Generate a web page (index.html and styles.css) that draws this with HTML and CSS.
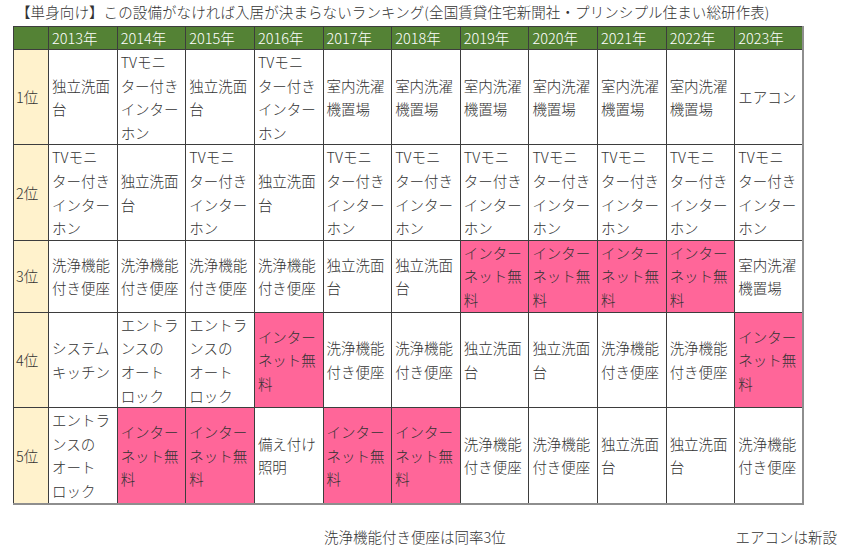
FILE: index.html
```html
<!DOCTYPE html>
<html lang="ja">
<head>
<meta charset="utf-8">
<title>単身向け 設備ランキング</title>
<link rel="stylesheet" href="styles.css">
</head>
<body>
<div class="page">
  <h1 class="title">【単身向け】この設備がなければ入居が決まらないランキング(全国賃貸住宅新聞社・プリンシプル住まい総研作表)</h1>
  <table class="rank">
    <colgroup>
      <col class="c-rank">
      <col class="c-year"><col class="c-year"><col class="c-year"><col class="c-year"><col class="c-year"><col class="c-year">
      <col class="c-year"><col class="c-year"><col class="c-year"><col class="c-year"><col class="c-year">
    </colgroup>
    <thead>
      <tr class="head">
        <th></th>
        <th>2013年</th><th>2014年</th><th>2015年</th><th>2016年</th><th>2017年</th><th>2018年</th>
        <th>2019年</th><th>2020年</th><th>2021年</th><th>2022年</th><th>2023年</th>
      </tr>
    </thead>
    <tbody>
      <tr class="r4">
        <th>1位</th>
        <td>独立洗面台</td>
        <td>TVモニター付きインターホン</td>
        <td>独立洗面台</td>
        <td>TVモニター付きインターホン</td>
        <td>室内洗濯機置場</td>
        <td>室内洗濯機置場</td>
        <td>室内洗濯機置場</td>
        <td>室内洗濯機置場</td>
        <td>室内洗濯機置場</td>
        <td>室内洗濯機置場</td>
        <td>エアコン</td>
      </tr>
      <tr class="r4b">
        <th>2位</th>
        <td>TVモニター付きインターホン</td>
        <td>独立洗面台</td>
        <td>TVモニター付きインターホン</td>
        <td>独立洗面台</td>
        <td>TVモニター付きインターホン</td>
        <td>TVモニター付きインターホン</td>
        <td>TVモニター付きインターホン</td>
        <td>TVモニター付きインターホン</td>
        <td>TVモニター付きインターホン</td>
        <td>TVモニター付きインターホン</td>
        <td>TVモニター付きインターホン</td>
      </tr>
      <tr class="r3">
        <th>3位</th>
        <td>洗浄機能付き便座</td>
        <td>洗浄機能付き便座</td>
        <td>洗浄機能付き便座</td>
        <td>洗浄機能付き便座</td>
        <td>独立洗面台</td>
        <td>独立洗面台</td>
        <td class="hot">インターネット無料</td>
        <td class="hot">インターネット無料</td>
        <td class="hot">インターネット無料</td>
        <td class="hot">インターネット無料</td>
        <td>室内洗濯機置場</td>
      </tr>
      <tr class="r4b">
        <th>4位</th>
        <td>システムキッチン</td>
        <td>エントランスのオートロック</td>
        <td>エントランスのオートロック</td>
        <td class="hot">インターネット無料</td>
        <td>洗浄機能付き便座</td>
        <td>洗浄機能付き便座</td>
        <td>独立洗面台</td>
        <td>独立洗面台</td>
        <td>洗浄機能付き便座</td>
        <td>洗浄機能付き便座</td>
        <td class="hot">インターネット無料</td>
      </tr>
      <tr class="r4">
        <th>5位</th>
        <td>エントランスのオートロック</td>
        <td class="hot">インターネット無料</td>
        <td class="hot">インターネット無料</td>
        <td>備え付け照明</td>
        <td class="hot">インターネット無料</td>
        <td class="hot">インターネット無料</td>
        <td>洗浄機能付き便座</td>
        <td>洗浄機能付き便座</td>
        <td>独立洗面台</td>
        <td>独立洗面台</td>
        <td>洗浄機能付き便座</td>
      </tr>
    </tbody>
  </table>
  <div class="notes">
    <span class="note note-a">洗浄機能付き便座は同率3位</span>
    <span class="note note-b">エアコンは新設</span>
  </div>
</div>
</body>
</html>
```

FILE: styles.css
```css
html, body {
  margin: 0;
  padding: 0;
  background: #ffffff;
}

.page {
  font-family: "Noto Sans CJK JP", "Noto Sans", sans-serif;
  font-size: 14.5px;
  font-weight: 300;
  color: #333333;
  line-break: strict;
}

.title {
  margin: 0;
  padding-left: 16px;
  font-size: 14.5px;
  font-weight: 300;
  line-height: 24px;
  height: 26px;
  white-space: nowrap;
  letter-spacing: 0.1px;
}

.rank {
  margin-left: 13px;
  width: 790px;
  table-layout: fixed;
  border-collapse: collapse;
  border-right: 2px solid #8e8e8e;
  border-bottom: 2px solid #8e8e8e;
}

.c-rank { width: 35px; }
.c-year { width: 68.64px; }

.rank th,
.rank td {
  border: 1px solid #3d3d3d;
  padding: 0 3px;
  text-align: left;
  vertical-align: middle;
  font-weight: 300;
  line-height: 23.6px;
  overflow: hidden;
}

.head th {
  background: #548235;
  color: #ffffff;
  height: 22px;
  line-height: 22px;
  white-space: nowrap;
}

.rank tbody th {
  background: #fff2cc;
  padding: 0 2px;
  white-space: nowrap;
}

.rank td {
  background: #ffffff;
}

.rank td.hot {
  background: #ff6699;
}

.r4 th, .r4 td { height: 94px; }
.r4b th, .r4b td { height: 92px; }
.r3 th, .r3 td { height: 71px; }

.notes {
  display: flex;
  align-items: center;
  margin-top: 22px;
  height: 20px;
  line-height: 20px;
  padding-left: 324px;
}

.note {
  white-space: nowrap;
}

.note-b {
  margin-left: auto;
  margin-right: 12px;
}
```
